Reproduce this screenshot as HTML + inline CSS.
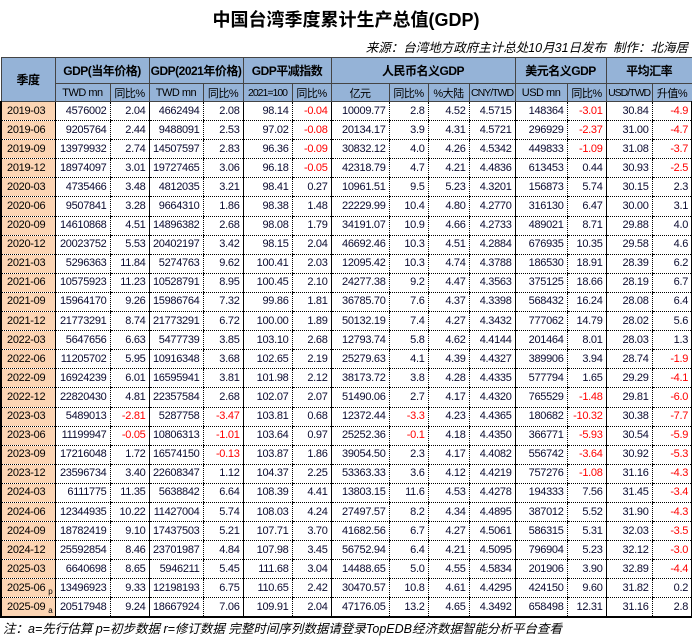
<!DOCTYPE html>
<html><head><meta charset="utf-8"><style>
*{margin:0;padding:0;box-sizing:border-box}
body{width:692px;height:637px;background:#fff;position:relative;overflow:hidden;font-family:"Liberation Sans","Noto Sans CJK SC",sans-serif;color:#000}
.t{position:absolute;left:0;width:692px;top:6px;text-align:center;font:bold 18px "Liberation Sans","Noto Sans CJK SC",sans-serif}
.s{position:absolute;right:4px;top:37px;font:italic 12.5px "Liberation Sans","Noto Sans CJK SC",sans-serif}
.f{position:absolute;left:3px;top:618px;font:italic 12.5px "Liberation Sans","Noto Sans CJK SC",sans-serif}
table{position:absolute;left:0;top:57px;width:691px;border-collapse:collapse;table-layout:fixed;font-size:11px;letter-spacing:-0.3px}
th{background:#95b3d7;border:1px solid #444;font-weight:normal;font-size:11px;white-space:nowrap;overflow:hidden;letter-spacing:-0.5px;padding:0}
th.n{letter-spacing:-1px;font-size:10.5px}
tr.h1 th{height:26px;font-weight:bold;font-size:12px}
tr.h2 th{height:18px}
td{height:19.1px;border-top:1px dotted #000;border-bottom:1px dotted #000;border-left:1px dotted #000;text-align:right;padding-right:3px;white-space:nowrap;overflow:hidden;color:#0a0a30;line-height:17px}
td:nth-child(1){background:#fcd5b4;text-align:left;padding-left:5px;border-left:2px solid #000;color:#000}
td:nth-child(2),td:nth-child(4),td:nth-child(6),td:nth-child(8),td:nth-child(12),td:nth-child(14){border-left:1px solid #000}
td:nth-child(15){border-right:2px solid #000}
tr:last-child td{border-bottom:2px solid #000}
.r{color:#f00}
.sb{font-size:8px;position:relative;top:3px;margin-left:3px;line-height:0}
</style></head><body>
<div class="t">中国台湾季度累计生产总值(GDP)</div>
<div class="s">来源：台湾地方政府主计总处10月31日发布&nbsp; 制作：北海居</div>
<table>
<colgroup><col style="width:54px"><col style="width:55px"><col style="width:39px"><col style="width:54px"><col style="width:40px"><col style="width:49px"><col style="width:39px"><col style="width:58px"><col style="width:39px"><col style="width:41px"><col style="width:46px"><col style="width:52px"><col style="width:39px"><col style="width:46px"><col style="width:40px"></colgroup>
<tr class="h1"><th rowspan="2">季度</th><th colspan="2">GDP(当年价格)</th><th colspan="2">GDP(2021年价格)</th><th colspan="2">GDP平减指数</th><th colspan="4">人民币名义GDP</th><th colspan="2">美元名义GDP</th><th colspan="2">平均汇率</th></tr>
<tr class="h2"><th>TWD mn</th><th>同比%</th><th>TWD mn</th><th>同比%</th><th class="n">2021=100</th><th>同比%</th><th>亿元</th><th>同比%</th><th>%大陆</th><th class="n">CNY/TWD</th><th>USD mn</th><th>同比%</th><th class="n">USD/TWD</th><th>升值%</th></tr>
<tr><td>2019-03</td><td>4576002</td><td>2.04</td><td>4662494</td><td>2.08</td><td>98.14</td><td class="r">-0.04</td><td>10009.77</td><td>2.8</td><td>4.52</td><td>4.5715</td><td>148364</td><td class="r">-3.01</td><td>30.84</td><td class="r">-4.9</td></tr>
<tr><td>2019-06</td><td>9205764</td><td>2.44</td><td>9488091</td><td>2.53</td><td>97.02</td><td class="r">-0.08</td><td>20134.17</td><td>3.9</td><td>4.31</td><td>4.5721</td><td>296929</td><td class="r">-2.37</td><td>31.00</td><td class="r">-4.7</td></tr>
<tr><td>2019-09</td><td>13979932</td><td>2.74</td><td>14507597</td><td>2.83</td><td>96.36</td><td class="r">-0.09</td><td>30832.12</td><td>4.0</td><td>4.26</td><td>4.5342</td><td>449833</td><td class="r">-1.09</td><td>31.08</td><td class="r">-3.7</td></tr>
<tr><td>2019-12</td><td>18974097</td><td>3.01</td><td>19727465</td><td>3.06</td><td>96.18</td><td class="r">-0.05</td><td>42318.79</td><td>4.7</td><td>4.21</td><td>4.4836</td><td>613453</td><td>0.44</td><td>30.93</td><td class="r">-2.5</td></tr>
<tr><td>2020-03</td><td>4735466</td><td>3.48</td><td>4812035</td><td>3.21</td><td>98.41</td><td>0.27</td><td>10961.51</td><td>9.5</td><td>5.23</td><td>4.3201</td><td>156873</td><td>5.74</td><td>30.15</td><td>2.3</td></tr>
<tr><td>2020-06</td><td>9507841</td><td>3.28</td><td>9664310</td><td>1.86</td><td>98.38</td><td>1.48</td><td>22229.99</td><td>10.4</td><td>4.80</td><td>4.2770</td><td>316130</td><td>6.47</td><td>30.00</td><td>3.1</td></tr>
<tr><td>2020-09</td><td>14610868</td><td>4.51</td><td>14896382</td><td>2.68</td><td>98.08</td><td>1.79</td><td>34191.07</td><td>10.9</td><td>4.66</td><td>4.2733</td><td>489021</td><td>8.71</td><td>29.88</td><td>4.0</td></tr>
<tr><td>2020-12</td><td>20023752</td><td>5.53</td><td>20402197</td><td>3.42</td><td>98.15</td><td>2.04</td><td>46692.46</td><td>10.3</td><td>4.51</td><td>4.2884</td><td>676935</td><td>10.35</td><td>29.58</td><td>4.6</td></tr>
<tr><td>2021-03</td><td>5296363</td><td>11.84</td><td>5274763</td><td>9.62</td><td>100.41</td><td>2.03</td><td>12095.42</td><td>10.3</td><td>4.74</td><td>4.3788</td><td>186530</td><td>18.91</td><td>28.39</td><td>6.2</td></tr>
<tr><td>2021-06</td><td>10575923</td><td>11.23</td><td>10528791</td><td>8.95</td><td>100.45</td><td>2.10</td><td>24277.38</td><td>9.2</td><td>4.47</td><td>4.3563</td><td>375125</td><td>18.66</td><td>28.19</td><td>6.7</td></tr>
<tr><td>2021-09</td><td>15964170</td><td>9.26</td><td>15986764</td><td>7.32</td><td>99.86</td><td>1.81</td><td>36785.70</td><td>7.6</td><td>4.37</td><td>4.3398</td><td>568432</td><td>16.24</td><td>28.08</td><td>6.4</td></tr>
<tr><td>2021-12</td><td>21773291</td><td>8.74</td><td>21773291</td><td>6.72</td><td>100.00</td><td>1.89</td><td>50132.19</td><td>7.4</td><td>4.27</td><td>4.3432</td><td>777062</td><td>14.79</td><td>28.02</td><td>5.6</td></tr>
<tr><td>2022-03</td><td>5647656</td><td>6.63</td><td>5477739</td><td>3.85</td><td>103.10</td><td>2.68</td><td>12793.74</td><td>5.8</td><td>4.62</td><td>4.4144</td><td>201464</td><td>8.01</td><td>28.03</td><td>1.3</td></tr>
<tr><td>2022-06</td><td>11205702</td><td>5.95</td><td>10916348</td><td>3.68</td><td>102.65</td><td>2.19</td><td>25279.63</td><td>4.1</td><td>4.39</td><td>4.4327</td><td>389906</td><td>3.94</td><td>28.74</td><td class="r">-1.9</td></tr>
<tr><td>2022-09</td><td>16924239</td><td>6.01</td><td>16595941</td><td>3.81</td><td>101.98</td><td>2.12</td><td>38173.72</td><td>3.8</td><td>4.28</td><td>4.4335</td><td>577794</td><td>1.65</td><td>29.29</td><td class="r">-4.1</td></tr>
<tr><td>2022-12</td><td>22820430</td><td>4.81</td><td>22357584</td><td>2.68</td><td>102.07</td><td>2.07</td><td>51490.06</td><td>2.7</td><td>4.17</td><td>4.4320</td><td>765529</td><td class="r">-1.48</td><td>29.81</td><td class="r">-6.0</td></tr>
<tr><td>2023-03</td><td>5489013</td><td class="r">-2.81</td><td>5287758</td><td class="r">-3.47</td><td>103.81</td><td>0.68</td><td>12372.44</td><td class="r">-3.3</td><td>4.23</td><td>4.4365</td><td>180682</td><td class="r">-10.32</td><td>30.38</td><td class="r">-7.7</td></tr>
<tr><td>2023-06</td><td>11199947</td><td class="r">-0.05</td><td>10806313</td><td class="r">-1.01</td><td>103.64</td><td>0.97</td><td>25252.36</td><td class="r">-0.1</td><td>4.18</td><td>4.4350</td><td>366771</td><td class="r">-5.93</td><td>30.54</td><td class="r">-5.9</td></tr>
<tr><td>2023-09</td><td>17216048</td><td>1.72</td><td>16574150</td><td class="r">-0.13</td><td>103.87</td><td>1.86</td><td>39054.50</td><td>2.3</td><td>4.17</td><td>4.4082</td><td>556742</td><td class="r">-3.64</td><td>30.92</td><td class="r">-5.3</td></tr>
<tr><td>2023-12</td><td>23596734</td><td>3.40</td><td>22608347</td><td>1.12</td><td>104.37</td><td>2.25</td><td>53363.33</td><td>3.6</td><td>4.12</td><td>4.4219</td><td>757276</td><td class="r">-1.08</td><td>31.16</td><td class="r">-4.3</td></tr>
<tr><td>2024-03</td><td>6111775</td><td>11.35</td><td>5638842</td><td>6.64</td><td>108.39</td><td>4.41</td><td>13803.15</td><td>11.6</td><td>4.53</td><td>4.4278</td><td>194333</td><td>7.56</td><td>31.45</td><td class="r">-3.4</td></tr>
<tr><td>2024-06</td><td>12344935</td><td>10.22</td><td>11427004</td><td>5.74</td><td>108.03</td><td>4.24</td><td>27497.57</td><td>8.2</td><td>4.34</td><td>4.4895</td><td>387012</td><td>5.52</td><td>31.90</td><td class="r">-4.3</td></tr>
<tr><td>2024-09</td><td>18782419</td><td>9.10</td><td>17437503</td><td>5.21</td><td>107.71</td><td>3.70</td><td>41682.56</td><td>6.7</td><td>4.27</td><td>4.5061</td><td>586315</td><td>5.31</td><td>32.03</td><td class="r">-3.5</td></tr>
<tr><td>2024-12</td><td>25592854</td><td>8.46</td><td>23701987</td><td>4.84</td><td>107.98</td><td>3.45</td><td>56752.94</td><td>6.4</td><td>4.21</td><td>4.5095</td><td>796904</td><td>5.23</td><td>32.12</td><td class="r">-3.0</td></tr>
<tr><td>2025-03</td><td>6640698</td><td>8.65</td><td>5946211</td><td>5.45</td><td>111.68</td><td>3.04</td><td>14488.65</td><td>5.0</td><td>4.55</td><td>4.5834</td><td>201906</td><td>3.90</td><td>32.89</td><td class="r">-4.4</td></tr>
<tr><td>2025-06<span class="sb">p</span></td><td>13496923</td><td>9.33</td><td>12198193</td><td>6.75</td><td>110.65</td><td>2.42</td><td>30470.57</td><td>10.8</td><td>4.61</td><td>4.4295</td><td>424150</td><td>9.60</td><td>31.82</td><td>0.2</td></tr>
<tr><td>2025-09<span class="sb">a</span></td><td>20517948</td><td>9.24</td><td>18667924</td><td>7.06</td><td>109.91</td><td>2.04</td><td>47176.05</td><td>13.2</td><td>4.65</td><td>4.3492</td><td>658498</td><td>12.31</td><td>31.16</td><td>2.8</td></tr>
</table>
<div class="f">注：a=先行估算 p=初步数据 r=修订数据 完整时间序列数据请登录TopEDB经济数据智能分析平台查看</div>
</body></html>
